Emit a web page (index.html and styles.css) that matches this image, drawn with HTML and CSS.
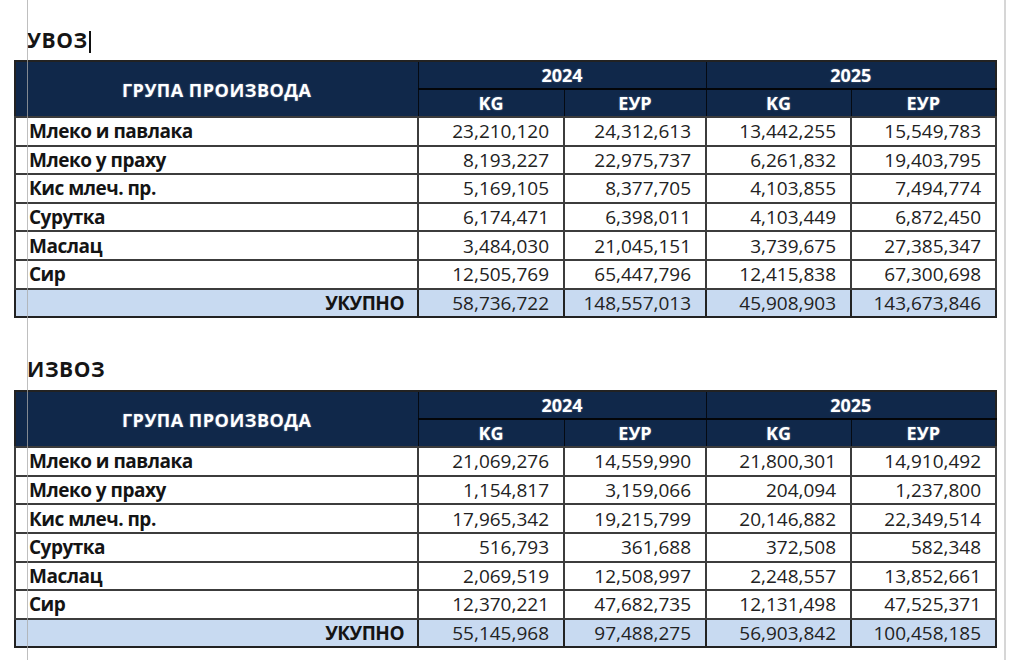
FILE: index.html
```html
<!DOCTYPE html>
<html lang="sr">
<head>
<meta charset="utf-8">
<title>Увоз / Извоз</title>
<link rel="stylesheet" href="styles.css">
</head>
<body>
<div class="page">
  <div class="margin-line"></div>
  <div class="page-edge"></div>

  <div class="title title-first">УВОЗ<span class="cursor"></span></div>
  <table class="sheet">
    <colgroup>
      <col class="c-name"><col class="c-kg1"><col class="c-eur1"><col class="c-kg2"><col class="c-eur2">
    </colgroup>
    <thead>
      <tr class="h1">
        <th rowspan="2" class="grp">ГРУПА ПРОИЗВОДА</th>
        <th colspan="2" class="year">2024</th>
        <th colspan="2" class="year">2025</th>
      </tr>
      <tr class="h2">
        <th class="unit">KG</th><th class="unit">ЕУР</th><th class="unit">KG</th><th class="unit">ЕУР</th>
      </tr>
    </thead>
    <tbody>
      <tr><td class="name">Млеко и павлака</td><td>23,210,120</td><td>24,312,613</td><td>13,442,255</td><td>15,549,783</td></tr>
      <tr><td class="name">Млеко у праху</td><td>8,193,227</td><td>22,975,737</td><td>6,261,832</td><td>19,403,795</td></tr>
      <tr><td class="name">Кис млеч. пр.</td><td>5,169,105</td><td>8,377,705</td><td>4,103,855</td><td>7,494,774</td></tr>
      <tr><td class="name">Сурутка</td><td>6,174,471</td><td>6,398,011</td><td>4,103,449</td><td>6,872,450</td></tr>
      <tr><td class="name">Маслац</td><td>3,484,030</td><td>21,045,151</td><td>3,739,675</td><td>27,385,347</td></tr>
      <tr><td class="name">Сир</td><td>12,505,769</td><td>65,447,796</td><td>12,415,838</td><td>67,300,698</td></tr>
      <tr class="total"><td class="name">УКУПНО</td><td>58,736,722</td><td>148,557,013</td><td>45,908,903</td><td>143,673,846</td></tr>
    </tbody>
  </table>

  <div class="title title-second">ИЗВОЗ</div>
  <table class="sheet">
    <colgroup>
      <col class="c-name"><col class="c-kg1"><col class="c-eur1"><col class="c-kg2"><col class="c-eur2">
    </colgroup>
    <thead>
      <tr class="h1">
        <th rowspan="2" class="grp">ГРУПА ПРОИЗВОДА</th>
        <th colspan="2" class="year">2024</th>
        <th colspan="2" class="year">2025</th>
      </tr>
      <tr class="h2">
        <th class="unit">KG</th><th class="unit">ЕУР</th><th class="unit">KG</th><th class="unit">ЕУР</th>
      </tr>
    </thead>
    <tbody>
      <tr><td class="name">Млеко и павлака</td><td>21,069,276</td><td>14,559,990</td><td>21,800,301</td><td>14,910,492</td></tr>
      <tr><td class="name">Млеко у праху</td><td>1,154,817</td><td>3,159,066</td><td>204,094</td><td>1,237,800</td></tr>
      <tr><td class="name">Кис млеч. пр.</td><td>17,965,342</td><td>19,215,799</td><td>20,146,882</td><td>22,349,514</td></tr>
      <tr><td class="name">Сурутка</td><td>516,793</td><td>361,688</td><td>372,508</td><td>582,348</td></tr>
      <tr><td class="name">Маслац</td><td>2,069,519</td><td>12,508,997</td><td>2,248,557</td><td>13,852,661</td></tr>
      <tr><td class="name">Сир</td><td>12,370,221</td><td>47,682,735</td><td>12,131,498</td><td>47,525,371</td></tr>
      <tr class="total"><td class="name">УКУПНО</td><td>55,145,968</td><td>97,488,275</td><td>56,903,842</td><td>100,458,185</td></tr>
    </tbody>
  </table>
</div>
</body>
</html>
```
FILE: styles.css
```css
html, body {
  margin: 0;
  padding: 0;
  background: #ffffff;
}

body {
  font-family: "Open Sans", "Noto Sans", "DejaVu Sans", sans-serif;
  color: #1e1e1e;
}

.page {
  position: relative;
  width: 1024px;
  height: 660px;
  padding: 27px 0 0 14px;
  box-sizing: border-box;
  overflow: hidden;
}

/* document margin guide line */
.margin-line {
  position: absolute;
  left: 27px;
  top: 0;
  bottom: 0;
  width: 1px;
  background: rgba(170, 170, 170, 0.75);
  z-index: 3;
  pointer-events: none;
}

/* right page edge */
.page-edge {
  position: absolute;
  left: 1004px;
  top: 0;
  bottom: 0;
  width: 2px;
  background: #d6d6d6;
  z-index: 3;
}

.title {
  height: 26px;
  line-height: 26px;
  padding-left: 13px;
  font-size: 21px;
  font-weight: 700;
  letter-spacing: 0.6px;
  color: #151515;
}

.title-first {
  margin-bottom: 7px;
}

.title-second {
  margin-top: 38px;
  margin-bottom: 8px;
}

.cursor {
  display: inline-block;
  width: 0;
  height: 22px;
  border-left: 2px solid #111;
  margin-left: 1px;
  vertical-align: -5px;
}

.sheet {
  width: 981px;
  table-layout: fixed;
  border-collapse: collapse;
  border: 2px solid #222;
  font-size: 19px;
}

.c-name { width: 403px; }
.c-kg1 { width: 146px; }
.c-eur1 { width: 142px; }
.c-kg2 { width: 145px; }
.c-eur2 { width: 145px; }

.sheet th {
  background: #10284a;
  color: #ffffff;
  font-weight: 700;
  font-size: 18px;
  letter-spacing: 0;
  padding: 0;
  text-align: center;
  border: 1px solid #050a12;
  text-shadow: 0 0 2px rgba(200, 215, 235, 0.45);
}

.sheet .grp {
  letter-spacing: 0.5px;
  padding-top: 2px;
}

.sheet .h1 th.year {
  height: 26px;
  border-bottom: 2px solid #030508;
}

.sheet .h2 th {
  height: 26px;
}

.sheet td {
  height: 26.6px;
  padding: 0 14px 0 0;
  text-align: right;
  vertical-align: middle;
  color: #222222;
  border: 2px solid #3c3c3c;
  white-space: nowrap;
}

.sheet td.name {
  text-align: left;
  padding: 0 0 0 13px;
  font-weight: 700;
  letter-spacing: -0.5px;
  color: #141414;
}

.sheet .total td {
  background: #c8daf1;
  border-color: #222;
}

.sheet .total td.name {
  text-align: right;
  padding: 0 13px 0 0;
}
```
